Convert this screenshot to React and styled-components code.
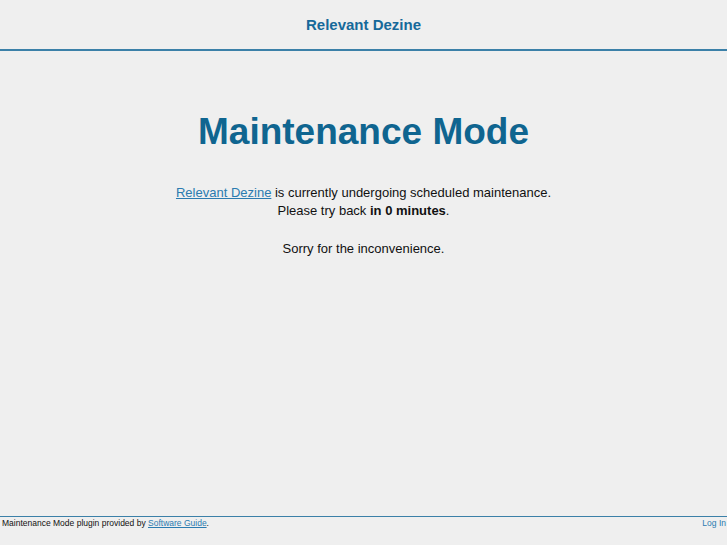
import React from "react";
import styled, { createGlobalStyle } from "styled-components";

const Global = createGlobalStyle`
  html, body {
    margin: 0;
    padding: 0;
    background: #efefef;
    font-family: "Liberation Sans", Arial, sans-serif;
    color: #111;
  }
`;

const Page = styled.div`
  min-height: 545px;
  display: flex;
  flex-direction: column;
`;

const Header = styled.header`
  height: 49px;
  border-bottom: 2px solid #3b80a8;
  display: flex;
  align-items: center;
  justify-content: center;
`;

const SiteName = styled.div`
  font-size: 15px;
  font-weight: bold;
  color: #16699a;
`;

const Main = styled.main`
  flex: 1;
  text-align: center;
  padding-top: 60px;
`;

const Title = styled.h1`
  margin: 0 0 31px;
  font-size: 37px;
  line-height: 42px;
  color: #0f6590;
`;

const Para = styled.p`
  margin: 0 0 20px;
  font-size: 13px;
  line-height: 18px;
  color: #111;
`;

const A = styled.a`
  color: #2b7bb0;
  text-decoration: underline;
`;

const Footer = styled.footer`
  border-top: 1px solid #3b80a8;
  height: 28px;
  display: flex;
  justify-content: space-between;
  align-items: flex-start;
  padding: 0 1px 0 2px;
  font-size: 8.5px;
  line-height: 12px;
  color: #111;
`;

const SmallLink = styled.a`
  color: #2b7bb0;
  text-decoration: ${(p) => (p.plain ? "none" : "underline")};
`;

export default function App() {
  return (
    <Page>
      <Global />
      <Header>
        <SiteName>Relevant Dezine</SiteName>
      </Header>
      <Main>
        <Title>Maintenance Mode</Title>
        <Para>
          <A href="#">Relevant Dezine</A> is currently undergoing scheduled maintenance.
          <br />
          Please try back <strong>in 0 minutes</strong>.
        </Para>
        <Para>Sorry for the inconvenience.</Para>
      </Main>
      <Footer>
        <span>
          Maintenance Mode plugin provided by <SmallLink href="#">Software Guide</SmallLink>.
        </span>
        <SmallLink href="#" plain>
          Log In
        </SmallLink>
      </Footer>
    </Page>
  );
}
